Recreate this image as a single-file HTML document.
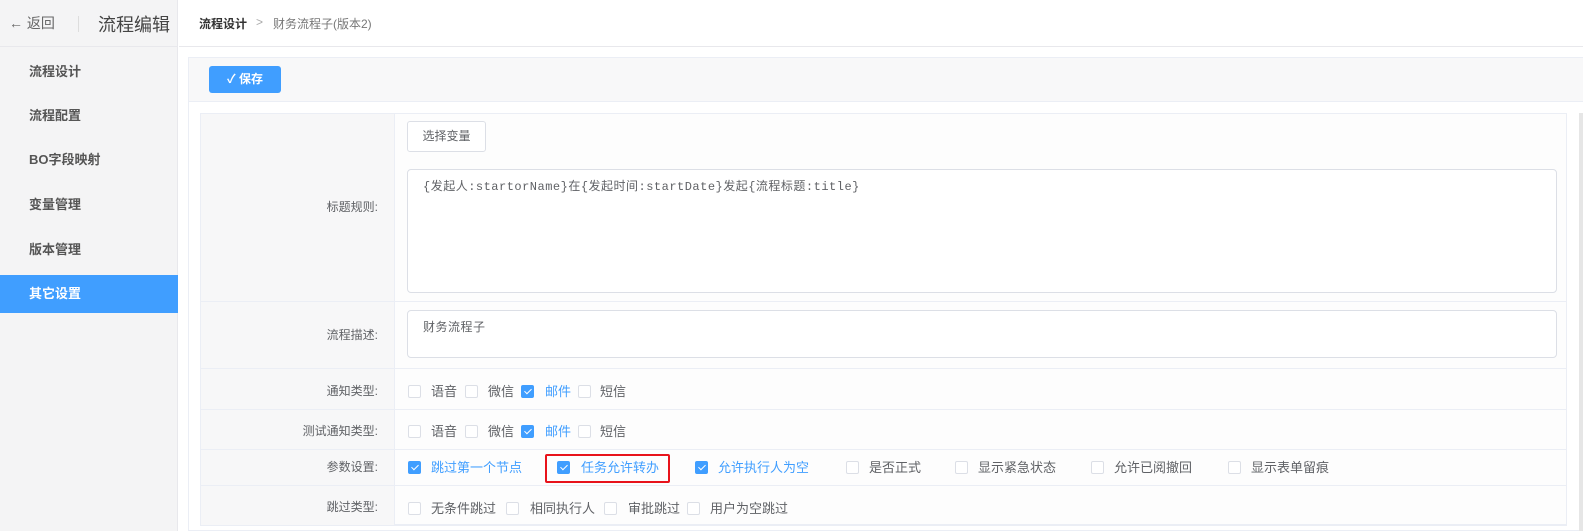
<!DOCTYPE html><html><head><meta charset="utf-8"><style>
*{margin:0;padding:0;box-sizing:border-box}
body{width:1583px;height:531px;overflow:hidden;background:#fff;font-family:"Liberation Sans","Noto Sans CJK SC",sans-serif;font-size:13px;color:#606266;position:relative}
.a{position:absolute;white-space:nowrap}
.side{left:0;top:0;width:178px;height:531px;background:#f4f4f5;border-right:1px solid #e8e8ec}
.nav{left:0;width:178px;height:38px;line-height:38px;padding-left:29px;font-weight:bold;color:#555;font-size:13px}
.cb{width:13px;height:13px;border:1px solid #dcdfe6;border-radius:2px;background:#fff}
.cb.on{background:#409eff;border-color:#409eff}
.cb.on:after{content:"";position:absolute;left:3.5px;top:1px;width:3px;height:6px;border:solid #fff;border-width:0 1px 1px 0;transform:rotate(45deg)}
.t{font-size:13px;color:#606266;line-height:13px}
.t.on{color:#409eff}
.lbl{left:200px;width:178px;text-align:right;font-size:12px;color:#606266;line-height:12px}
.hl{left:200px;width:1367px;height:1px;background:#ebeef5}
.ta{border:1px solid #dcdfe6;border-radius:4px;background:#fff;font-family:"Liberation Mono","Noto Sans CJK SC",monospace;font-size:12px;color:#606266;padding:7px 15px;letter-spacing:0.5px}
</style></head><body>
<div class="a side"></div>
<div class="a" style="left:0;top:46px;width:178px;height:1px;background:#e8e8ec"></div>
<div class="a" style="left:9px;top:13px;font-size:14px;color:#666">← 返回</div>
<div class="a" style="left:78px;top:16px;width:1px;height:16px;background:#ddd"></div>
<div class="a" style="left:98px;top:11px;font-size:18px;color:#444">流程编辑</div>
<div class="a nav" style="top:53px">流程设计</div>
<div class="a nav" style="top:97px">流程配置</div>
<div class="a nav" style="top:141px">BO字段映射</div>
<div class="a nav" style="top:186px">变量管理</div>
<div class="a nav" style="top:231px">版本管理</div>
<div class="a nav" style="top:275px;background:#409eff;color:#fff">其它设置</div>
<div class="a" style="left:179px;top:46px;width:1404px;height:1px;background:#e8e8ec"></div>
<div class="a" style="left:199px;top:15px;font-size:12px;font-weight:bold;color:#333">流程设计</div>
<div class="a" style="left:256px;top:15px;font-size:12px;color:#aaa">&gt;</div>
<div class="a" style="left:273px;top:15px;font-size:12px;color:#777">财务流程子(版本2)</div>
<div class="a" style="left:188px;top:57px;width:1395px;height:474px;border:1px solid #ebeef5;border-right:none"></div>
<div class="a" style="left:189px;top:58px;width:1394px;height:44px;background:#f8f8f9;border-bottom:1px solid #ebeef5"></div>
<div class="a" style="left:209px;top:66px;width:72px;height:27px;background:#409eff;border-radius:3px;color:#fff;font-size:12px;font-weight:bold;line-height:27px;text-align:center">✓ 保存</div>
<div class="a" style="left:200px;top:113px;width:1367px;height:412px;border:1px solid #ebeef5;background:#fdfdfd"></div>
<div class="a" style="left:201px;top:114px;width:194px;height:411px;background:#f7f7f8;border-right:1px solid #ebeef5"></div>
<div class="a" style="left:1579px;top:113px;width:4px;height:418px;background:#e6e6e6"></div>
<div class="a hl" style="top:301px"></div>
<div class="a hl" style="top:368px"></div>
<div class="a hl" style="top:409px"></div>
<div class="a hl" style="top:449px"></div>
<div class="a hl" style="top:485px"></div>
<div class="a hl" style="top:525px"></div>
<div class="a lbl" style="top:201px">标题规则:</div>
<div class="a lbl" style="top:329px">流程描述:</div>
<div class="a lbl" style="top:385px">通知类型:</div>
<div class="a lbl" style="top:425px">测试通知类型:</div>
<div class="a lbl" style="top:461px">参数设置:</div>
<div class="a lbl" style="top:501px">跳过类型:</div>
<div class="a" style="left:407px;top:121px;width:79px;height:31px;border:1px solid #dcdfe6;border-radius:3px;background:#fff;font-size:12px;line-height:29px;text-align:center">选择变量</div>
<div class="a ta" style="left:407px;top:169px;width:1150px;height:124px">{发起人:startorName}在{发起时间:startDate}发起{流程标题:title}</div>
<div class="a ta" style="left:407px;top:310px;width:1150px;height:48px">财务流程子</div>
<div class="a cb" style="left:408px;top:385px"></div><div class="a t" style="left:431px;top:385px">语音</div>
<div class="a cb" style="left:465px;top:385px"></div><div class="a t" style="left:488px;top:385px">微信</div>
<div class="a cb on" style="left:521px;top:385px"></div><div class="a t on" style="left:545px;top:385px">邮件</div>
<div class="a cb" style="left:578px;top:385px"></div><div class="a t" style="left:600px;top:385px">短信</div>
<div class="a cb" style="left:408px;top:425px"></div><div class="a t" style="left:431px;top:425px">语音</div>
<div class="a cb" style="left:465px;top:425px"></div><div class="a t" style="left:488px;top:425px">微信</div>
<div class="a cb on" style="left:521px;top:425px"></div><div class="a t on" style="left:545px;top:425px">邮件</div>
<div class="a cb" style="left:578px;top:425px"></div><div class="a t" style="left:600px;top:425px">短信</div>
<div class="a cb on" style="left:408px;top:461px"></div><div class="a t on" style="left:431px;top:461px">跳过第一个节点</div>
<div class="a" style="left:545px;top:454px;width:125px;height:29px;border:2px solid #e8131b;border-radius:2px"></div>
<div class="a cb on" style="left:557px;top:461px"></div><div class="a t on" style="left:581px;top:461px">任务允许转办</div>
<div class="a cb on" style="left:695px;top:461px"></div><div class="a t on" style="left:718px;top:461px">允许执行人为空</div>
<div class="a cb" style="left:846px;top:461px"></div><div class="a t" style="left:869px;top:461px">是否正式</div>
<div class="a cb" style="left:955px;top:461px"></div><div class="a t" style="left:978px;top:461px">显示紧急状态</div>
<div class="a cb" style="left:1091px;top:461px"></div><div class="a t" style="left:1114px;top:461px">允许已阅撤回</div>
<div class="a cb" style="left:1228px;top:461px"></div><div class="a t" style="left:1251px;top:461px">显示表单留痕</div>
<div class="a cb" style="left:408px;top:502px"></div><div class="a t" style="left:431px;top:502px">无条件跳过</div>
<div class="a cb" style="left:506px;top:502px"></div><div class="a t" style="left:530px;top:502px">相同执行人</div>
<div class="a cb" style="left:604px;top:502px"></div><div class="a t" style="left:628px;top:502px">审批跳过</div>
<div class="a cb" style="left:687px;top:502px"></div><div class="a t" style="left:710px;top:502px">用户为空跳过</div>
</body></html>
